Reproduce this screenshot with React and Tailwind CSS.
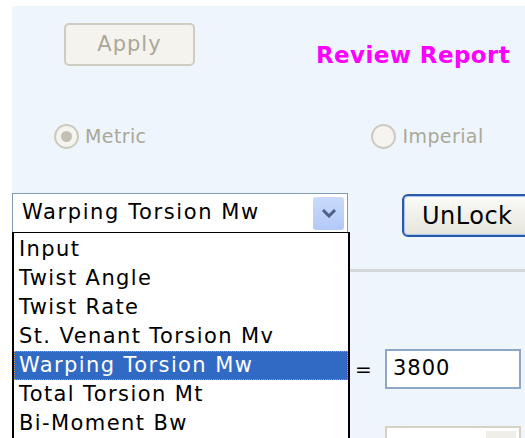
import { useState } from "react";

const options = [
  "Input",
  "Twist Angle",
  "Twist Rate",
  "St. Venant Torsion Mv",
  "Warping Torsion Mw",
  "Total Torsion Mt",
  "Bi-Moment Bw",
];

function Radio({ label, checked }) {
  return (
    <div className="flex items-center gap-[6px]">
      <span className="w-[25px] h-[25px] rounded-full border-2 border-[#cdcbbf] bg-[#f5f4ef] flex items-center justify-center">
        {checked && <span className="w-[11px] h-[11px] rounded-full bg-[#c2c0b3]" />}
      </span>
      <span className="text-[19px] text-[#aaa899] tracking-[0.4px]">{label}</span>
    </div>
  );
}

export default function App() {
  const [selected] = useState("Warping Torsion Mw");

  return (
    <div
      className="w-[525px] h-[438px] bg-white overflow-hidden pl-[12px] pt-[6px]"
      style={{ fontFamily: '"DejaVu Sans", Verdana, sans-serif' }}
    >
      <div className="relative h-full bg-[#eef5fd] overflow-hidden">
        {/* Apply + title */}
        <div className="flex items-start h-[117px]">
          <button className="ml-[52px] mt-[17px] w-[131px] h-[43px] rounded-[5px] border-2 border-[#cfcdc1] bg-[#f4f3ee] text-[21px] tracking-[1px] text-[#aca899]">
            Apply
          </button>
          <div className="ml-[121px] mt-[32px] text-[23px] font-bold tracking-[0.4px] text-[#ff00ff]">
            Review Report
          </div>
        </div>

        {/* Units */}
        <div className="flex items-center h-[26px]">
          <div className="ml-[42px]">
            <Radio label="Metric" checked />
          </div>
          <div className="ml-[225px]">
            <Radio label="Imperial" />
          </div>
        </div>

        {/* Result selector */}
        <div className="flex items-start mt-[44px]">
          <div className="shrink-0 w-[336px] h-[40px] border border-[#7f9db9] bg-white flex items-center justify-between pl-[9px] pr-[3px]">
            <span className="text-[21px] tracking-[1.6px] text-black">{selected}</span>
            <span className="w-[31px] h-[33px] rounded-[3px] bg-gradient-to-b from-[#c9dafc] to-[#b3c9f7] flex items-center justify-center">
              <svg width="16" height="10" viewBox="0 0 16 10">
                <path d="M2 2 L8 8 L14 2" fill="none" stroke="#4d6185" strokeWidth="3" />
              </svg>
            </span>
          </div>
          <button className="shrink-0 ml-[54px] mt-[1px] w-[140px] h-[43px] rounded-[6px] border-2 border-[#2a5aa8] bg-gradient-to-b from-[#fbfbf8] to-[#e6e5dc] text-left pl-[18px] text-[24px] tracking-[0.5px] text-black shadow-[inset_0_0_0_1px_#a9c3ee]">
            UnLock
          </button>
        </div>

        <div className="mt-[32px] h-[3px] bg-[#d5d7da]" />

        {/* Value rows */}
        <div className="flex items-center mt-[77px]">
          <span className="ml-[343px] w-[30px] text-[20px] text-black">=</span>
          <div className="w-[136px] h-[40px] border-2 border-[#8ea7c6] bg-white flex items-center pl-[6px] text-[21px] tracking-[1px] text-black">
            3800
          </div>
        </div>
        <div className="flex items-start mt-[37px]">
          <span className="ml-[343px] w-[30px] text-[20px] leading-[20px] pt-[4px] text-black">=</span>
          <div className="w-[136px] h-[40px] border-2 border-[#d6d3c4] bg-white flex justify-end p-[3px]">
            <span className="w-[30px] h-full bg-[#efeee8]" />
          </div>
        </div>

        {/* Open option list */}
        <ul className="absolute left-0 top-[226px] w-[338px] border-2 border-black border-t-[1px] bg-white pt-[2px]">
          {options.map((opt) => (
            <li
              key={opt}
              className={`h-[29px] flex items-center pl-[5px] text-[21px] tracking-[1.4px] ${
                opt === selected
                  ? "bg-[#316ac5] text-white outline-1 outline-dotted outline-[#d59a3a] -outline-offset-1"
                  : "text-black"
              }`}
            >
              {opt}
            </li>
          ))}
        </ul>
      </div>
    </div>
  );
}
